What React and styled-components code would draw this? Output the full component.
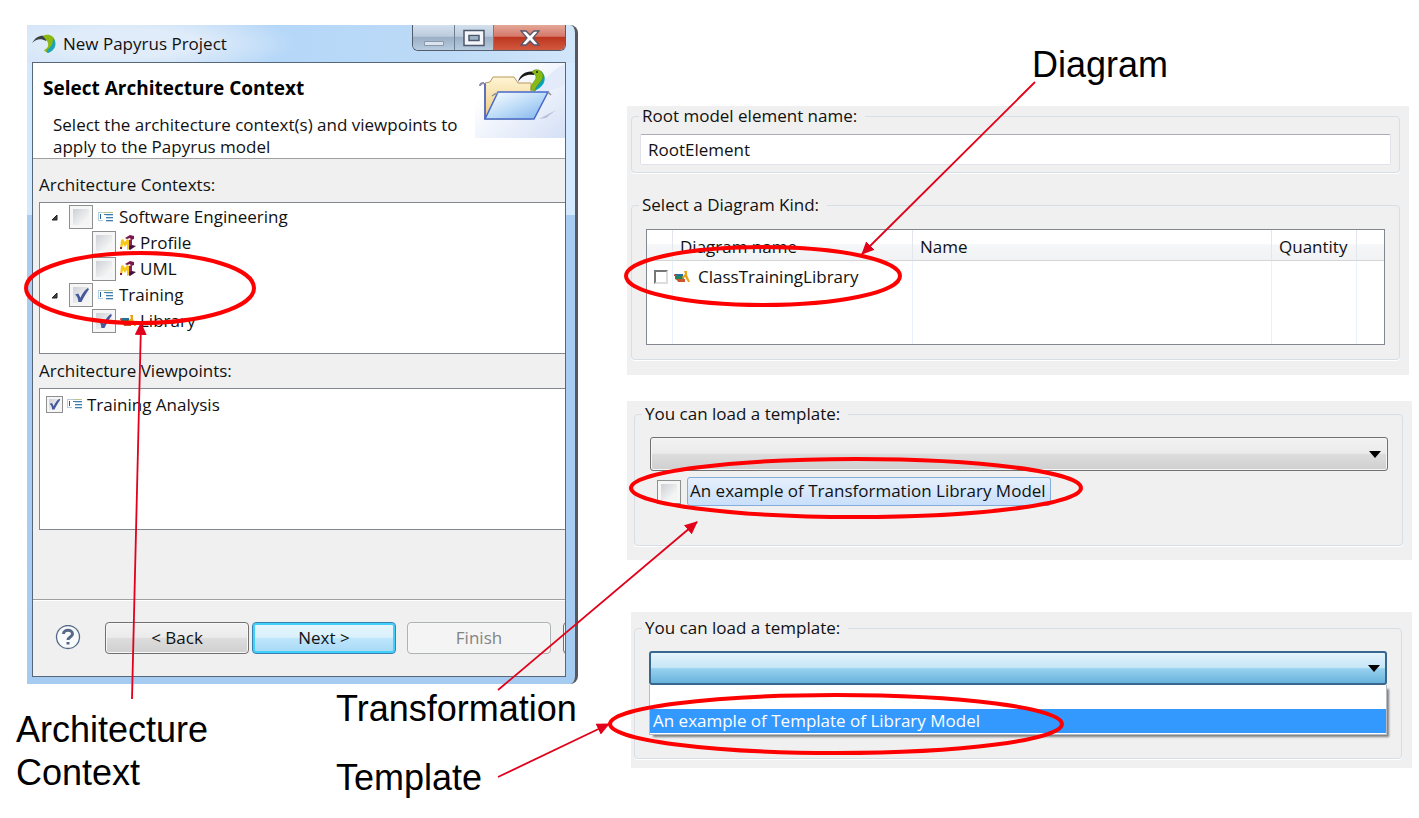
import React from "react";
import styled, { createGlobalStyle, css } from "styled-components";

const GlobalStyle = createGlobalStyle`
  *, *::before, *::after { box-sizing: border-box; }
  body {
    margin: 0;
    background: #fff;
    color: #111;
    font: 17px/20px "Open Sans", "Noto Sans", sans-serif;
  }
  button, input, select { font: inherit; color: inherit; margin: 0; }
  svg { display: block; flex: none; }
`;

/* ---------- slide ---------- */
const Slide = styled.main`
  position: relative;
  display: flex;
  min-height: 100vh;
  overflow: hidden;
`;
const LeftSide = styled.div`
  flex: none;
  width: 627px;
  padding: 25px 0 0 16px;
`;
const RightSide = styled.div`
  flex: 1;
  min-width: 0;
  padding: 43px 7px 0 0;
`;
const Captions = styled.div`
  display: flex;
  align-items: flex-start;
  margin-top: 3px;
`;
const CaptionColumn = styled.div`
  display: grid;
  gap: 26px;
  width: ${(p) => p.$width};
  padding-top: ${(p) => p.$top || "0"};
`;
const Caption = styled.p`
  margin: 0 0 0 ${(p) => p.$indent || "0"};
  font: 36px/43px "Liberation Sans", Arial, sans-serif;
  color: #000;
`;
const Overlay = styled.svg`
  position: absolute;
  top: 0;
  left: 0;
  pointer-events: none;
`;

/* ---------- wizard window ---------- */
const Window = styled.section`
  width: 551px;
  margin-left: 11px;
  padding: 0 9px 7px 5px;
  border-right: 3px solid #55595e;
  border-radius: 0 8px 8px 0;
  background:
    radial-gradient(ellipse 170px 34px at 100px 18px, #e0ecf9 40%, transparent),
    linear-gradient(90deg, #cfe3f8, #b5d7f8 45%, #bcdaf7 75%, #d2e6fa) top / 100% 38px no-repeat,
    linear-gradient(#d3e9ff 0 190px, #a9cdf2 190px 480px, #a6cbf1);
`;
const TitleBar = styled.header`
  display: flex;
  align-items: flex-start;
  justify-content: space-between;
  height: 37px;
`;
const TitleText = styled.div`
  display: flex;
  align-items: center;
  gap: 6px;
  height: 38px;
`;
const Controls = styled.div`
  display: flex;
  border: 1px solid #535d6c;
  border-top: 0;
  border-radius: 0 0 6px 6px;
  overflow: hidden;
`;
const ControlButton = styled.button`
  display: grid;
  place-items: center;
  width: ${(p) => p.$width};
  height: 25px;
  padding: 0;
  border: 0;
  border-right: 1px solid #6f7f93;
  background: linear-gradient(#d3e0ee, #bccbdc 45%, #9bafc5 50%, #b8cce0);
  &:last-child { border-right: 0; }
  ${(p) => p.$close && css`
    background: linear-gradient(#e3a898, #d5786a 45%, #bd3720 50%, #d1593f);
  `}
`;
const Client = styled.div`
  border: 1px solid #56677a;
  background: #f0f0f0;
  overflow: hidden;
`;
const Header = styled.div`
  display: flex;
  justify-content: space-between;
  align-items: flex-start;
  padding-left: 10px;
  border-bottom: 1px solid #a0a0a0;
  background: #fff;
`;
const Heading = styled.h1`
  margin: 13px 0 14px;
  font-size: 19px;
  line-height: 24px;
  color: #000;
`;
const Description = styled.p`
  margin: 0 0 0 10px;
  line-height: 22px;
`;
const Content = styled.div`
  padding: 16px 0 69px 6px;
`;
const ListTitle = styled.h2`
  margin: 0 0 7px;
  font-size: 17px;
  line-height: 20px;
  font-weight: 400;
`;
const List = styled.ul`
  list-style: none;
  margin: 0 0 7px;
  padding: 1px 0;
  min-height: ${(p) => p.$height};
  border: 1px solid #828790;
  border-right: 0;
  background: #fff;
  &:last-child { margin: 0; }
`;
const Item = styled.li`
  display: flex;
  align-items: center;
  height: ${(p) => (p.$compact ? "29px" : "26px")};
  padding-left: ${(p) => p.$indent};
`;
const Expander = styled.svg`
  margin-right: 11px;
`;
const CheckLabel = styled.label`
  display: flex;
  align-items: center;
  gap: ${(p) => p.$gap || "4px"};
`;
const BoxCell = styled.span`
  display: grid;
  flex: none;
  place-items: center;
  & > * { grid-area: 1 / 1; }
`;
const Box = styled.input`
  appearance: none;
  width: ${(p) => p.$size};
  height: ${(p) => p.$size};
  border: 1px solid #8e8f8f;
  background: linear-gradient(135deg, #cdd0d6, #f4f4f4 75%) content-box, #f6f6f6;
  padding: ${(p) => (p.$size === "24px" ? "3px" : "2px")};
  ${(p) => p.$classic && css`
    border: 2px solid;
    border-color: #777 #ddd #ddd #777;
    background: #fff;
  `}
`;
const Footer = styled.footer`
  display: flex;
  align-items: center;
  height: 77px;
  padding: 0 0 0 22px;
  border-top: 1px solid #a0a0a0;
  box-shadow: inset 0 1px #fff;
`;
const HelpButton = styled.button`
  padding: 0;
  margin-right: 24px;
  border: 0;
  background: none;
`;
const PushButton = styled.button`
  flex: none;
  width: 144px;
  height: 32px;
  margin-right: ${(p) => p.$after || "0"};
  padding: 0;
  border: 1px solid #707070;
  border-radius: 4px;
  background: linear-gradient(#f2f2f2, #ebebeb 48%, #dddddd 50%, #cfcfcf);
  box-shadow: inset 0 0 0 1px #f7f7f7;
  ${(p) => p.$primary && css`
    border-color: #3c7fb1;
    background: linear-gradient(#e9f6fd, #d9f0fc 48%, #bee6fd 50%, #a7d9f5);
    box-shadow: inset 0 0 0 2px #40d0fa;
  `}
  &:disabled {
    border-color: #adb2b5;
    background: #f4f4f4;
    color: #838383;
  }
`;

/* ---------- option panels ---------- */
const Panel = styled.section`
  margin: ${(p) => p.$margin};
  padding: ${(p) => p.$padding};
  background: #f0f0f0;
`;
const Group = styled.fieldset`
  min-width: 0;
  margin: 0 0 ${(p) => p.$after || "0"};
  padding: 0 7px;
  border: 1px solid #d5dfe5;
  border-radius: 4px;
  box-shadow: 0 1px #fff;
`;
const GroupBody = styled.div`
  padding: ${(p) => p.$padding};
`;
const Legend = styled.legend`
  padding: 0 8px 0 3px;
  line-height: 20px;
`;
const TextBox = styled.input`
  display: block;
  width: 100%;
  height: 31px;
  padding: 0 7px;
  border: 1px solid #e2e3ea;
  border-top-color: #abadb3;
  border-radius: 2px;
  background: #fff;
`;
const Table = styled.table`
  width: 100%;
  height: 116px;
  table-layout: fixed;
  border: 1px solid #828790;
  border-spacing: 0;
  background: #fff;
  th {
    height: 31px;
    padding: 4px 0 0 7px;
    border-right: 1px solid #e3e6ea;
    border-bottom: 1px solid #d5d5d5;
    background: linear-gradient(#fff 45%, #f4f6f8 50%, #f1f2f4);
    font-weight: 400;
    text-align: left;
  }
  td {
    padding: 6px 0 0;
    border-right: 1px solid #e8f2fc;
    vertical-align: top;
  }
  th:last-child, td:last-child { border-right: 0; }
`;
const Col = styled.col`
  width: ${(p) => p.$width};
`;
const TickCell = styled.div`
  display: flex;
  align-items: center;
  height: 20px;
  padding-left: 7px;
`;
const NameCell = styled.label`
  display: flex;
  align-items: center;
  gap: 8px;
  padding-left: 1px;
`;
const Combo = styled.div`
  position: relative;
`;
const Select = styled.select`
  display: block;
  appearance: none;
  width: 100%;
  height: 34px;
  border: 1px solid #707070;
  border-radius: 3px;
  background: linear-gradient(#f2f2f2, #ebebeb 48%, #dddddd 50%, #cfcfcf);
  box-shadow: inset 0 0 0 1px #f5f5f5;
  ${(p) => p.$open && css`
    border: 2px solid #38678f;
    background: linear-gradient(#e5f4fc, #c4e5f6 50%, #98d1ef 52%, #68b3db);
    box-shadow: none;
  `}
`;
const Arrow = styled.svg`
  position: absolute;
  top: 14px;
  right: 7px;
  pointer-events: none;
`;
const Choice = styled.div`
  padding: 6px 0 0 7px;
`;
const ChoiceText = styled.span`
  height: 29px;
  padding: 3px 4px 3px 2px;
  border: 1px solid #84acdd;
  border-radius: 3px;
  background: linear-gradient(#e6f0fc, #c9dffb);
`;
const Menu = styled.ul`
  list-style: none;
  margin: 0;
  padding: 0 0 1px;
  border: 1px solid #b8bcc4;
  border-top: 0;
  background: #fff;
  box-shadow: 3px 3px 2px -1px #808080;
`;
const Option = styled.li`
  height: 24px;
  padding: 2px 3px;
  ${(p) => p.$selected && css`
    background: #3399ff;
    color: #fff;
  `}
`;

/* ---------- drawings ---------- */
const PapyrusIcon = () => (
  <svg width="25" height="20" viewBox="0 0 25 20" aria-hidden="true">
    <path d="M0 9C4 2 10 0 16 3l-2 4C9 4 4 5 0 9z" fill="#3b4246" />
    <path d="M11 2C15-1 23 1 23 8c0 6-3 9-7 11-3-1-4-3-4-3 5-2 5-6 3-9-1-2-3-3-4-5z" fill="#8cb80f" />
    <path d="M21 4c5 5 2 13-5 15-2-1-1-3-1-3 4-3 6-6 6-12z" fill="#1ba4b5" />
  </svg>
);
const FolderArt = () => (
  <svg width="90" height="75" viewBox="0 0 90 75" aria-hidden="true">
    <defs>
      <linearGradient id="wash" x1="0" y1="0" x2="1" y2="1">
        <stop offset=".25" stopColor="#fff" /><stop offset="1" stopColor="#d5e0f6" />
      </linearGradient>
      <linearGradient id="front" x1="0" y1="0" x2="1" y2="1">
        <stop offset="0" stopColor="#fff" /><stop offset=".5" stopColor="#bfddf8" /><stop offset="1" stopColor="#7fb2ec" />
      </linearGradient>
      <linearGradient id="back" x1="0" y1="0" x2="0" y2="1">
        <stop offset="0" stopColor="#fff5d5" /><stop offset="1" stopColor="#ecc779" />
      </linearGradient>
    </defs>
    <path d="M0 0h90v75H0z" fill="url(#wash)" />
    <path d="M90 1C75 8 68 18 60 33L90 22z" fill="#e3eaf9" />
    <g transform="translate(-1 1)">
      <path d="M65 55L82 46 72 54z" fill="#b9c0da" />
      <path d="M11 55V19l5-1 3-5h21l4 6h13v36z" fill="url(#back)" stroke="#b79858" />
      <path d="M6 22q0-3 4-3M11 19v36" fill="none" stroke="#8a8ca8" strokeWidth="2" />
      <path d="M11 20v35" fill="none" stroke="#5267c4" strokeWidth="1.5" />
      <path d="M24 28L11 55h49l14-27z" fill="url(#front)" stroke="#4669c9" strokeWidth="1.5" />
      <path d="M24 29l-3 1-3 2M74 28l3 3" fill="none" stroke="#929292" strokeWidth="1.5" />
      <path d="M44 18C46 10 53 6 61 8l-1 3c-7-1-12 1-16 7z" fill="#171717" />
      <path d="M67 7c7 6 4 16-7 20l0-3c4-4 7-10 7-17z" fill="#08a2be" />
      <path d="M58 8c2-4 11-3 11 4 0 6-7 8-8 15l-4-1c-1-6 5-9 5-13 0-2-2-3-4-5z" fill="#87bb12" stroke="#557b12" strokeWidth=".5" />
      <circle cx="63" cy="8" r="1" fill="#222" />
    </g>
  </svg>
);
const ContextIcon = () => (
  <svg width="16" height="13" viewBox="0 0 16 13" aria-hidden="true">
    <path d="M0 1h6v1H0zM0 2h1v8H0zM0 9h5v1H0z" fill="#b5cddd" />
    <path d="M2 3h1v5H2z" fill="#1f5f96" />
    <path d="M6 1h9v1H6z" fill="#b9c58b" />
    <path d="M6 3h9v1H6zM8 6h7v1H8zM8 9h7v1H8z" fill="#3b7fb0" />
    <path d="M8 4h7v1H8zM8 7h7v1H8zM8 10h7v1H8z" fill="#c3d7e4" />
  </svg>
);
const ModelIcon = () => (
  <svg width="16" height="16" viewBox="0 0 16 16" aria-hidden="true">
    <path d="M5 3l5-3 4 1v3l-3 1-1-2-3 1z" fill="#7b174c" />
    <path d="M9 5l3-1v7l-3 1z" fill="#8c2350" />
    <path d="M9 11l3-1 4 1-6 4-3-2z" fill="#45103f" />
    <path d="M1 5l2-1 2 3 2-3 2 1v9l-2 1V9l-2 3-2-3-1 5-2 0z" fill="#f7c719" />
    <path d="M0 12h2v2H0z" fill="#7b174c" />
  </svg>
);
const LibraryIcon = () => (
  <svg width="16" height="14" viewBox="0 0 16 14" aria-hidden="true">
    <path d="M1 4h8v2H1z" fill="#216f9f" />
    <path d="M1 6h9v3H1z" fill="#25845d" />
    <path d="M0 4l3 2H0zM3 9h8v3H4z" fill="#cd552b" />
    <path d="M1 9h3v2z" fill="#b5612f" />
    <path d="M10 1h3v4l3 7h-2l-3-5-2 2-1-2 3-3z" fill="#eaa319" />
  </svg>
);
const HelpIcon = () => (
  <svg width="26" height="26" viewBox="0 0 26 26" fill="none" stroke="#566986" aria-hidden="true">
    <circle cx="13" cy="12" r="11.5" strokeWidth="1.3" fill="#f8f9fb" />
    <path d="M8.500 9c0-5 9-5 9 0 0 3-4.500 3-4.500 6M13 17v2.500" strokeWidth="3" />
  </svg>
);
const Tick = ({ size }) => (
  <svg width={size} height={size} viewBox="0 0 16 16" pointerEvents="none" aria-hidden="true">
    <path d="M2 7l3-1 2 4c2-4 4-7 7-9l1 1c-3 4-5 8-7 12H5C5 11 4 9 2 7z" fill="#45589b" />
  </svg>
);
const DownArrow = () => (
  <Arrow width="12" height="7" viewBox="0 0 12 7" aria-hidden="true">
    <path d="M0 0h12L6 7z" fill="#000" />
  </Arrow>
);

/* ---------- parts ---------- */
function CheckBox({ size = "24px", ...rest }) {
  return (
    <BoxCell>
      <Box type="checkbox" $size={size} {...rest} />
      {rest.defaultChecked && <Tick size={size === "24px" ? 17 : 13} />}
    </BoxCell>
  );
}

function TreeItem({ text, icon, child, checked }) {
  return (
    <Item $indent={child ? "52px" : "11px"}>
      {!child && (
        <Expander width="7" height="7" viewBox="0 0 7 7" aria-hidden="true">
          <path d="M6 1v5H1z" fill="#404040" stroke="#222" />
        </Expander>
      )}
      <CheckLabel $gap={child ? "4px" : "5px"}>
        <CheckBox defaultChecked={checked} />
        {icon}
        {text}
      </CheckLabel>
    </Item>
  );
}

const ellipses = [
  [140, 288, 114, 35],
  [763, 276, 137, 29],
  [856, 488, 225, 29],
  [836, 724, 226, 29],
];
const arrows = [
  [132, 699, 141, 323],
  [1035, 82, 862, 254],
  [498, 690, 697, 522],
  [498, 777, 609, 724],
];

function Annotations() {
  return (
    <Overlay width="1419" height="818" viewBox="0 0 1419 818" aria-hidden="true">
      <defs>
        <marker id="head" markerUnits="userSpaceOnUse" markerWidth="13" markerHeight="12" refX="12" refY="6" orient="auto">
          <path d="M0 0L13 6L0 12z" fill="#e2001a" />
        </marker>
      </defs>
      {arrows.map(([x1, y1, x2, y2]) => (
        <line key={y1} x1={x1} y1={y1} x2={x2} y2={y2} stroke="#e2001a" strokeWidth="1.800" markerEnd="url(#head)" />
      ))}
      {ellipses.map(([cx, cy, rx, ry]) => (
        <ellipse key={cy} cx={cx} cy={cy} rx={rx} ry={ry} fill="none" stroke="#ff0000" strokeWidth="4" />
      ))}
    </Overlay>
  );
}

function Wizard() {
  return (
    <Window>
      <TitleBar>
        <TitleText><PapyrusIcon />New Papyrus Project</TitleText>
        <Controls>
          <ControlButton $width="42px" aria-label="Minimize">
            <svg width="20" height="20" viewBox="0 0 20 20"><path d="M.5 13.500h19v4H.5z" fill="#dce5ee" stroke="#8998aa" /></svg>
          </ControlButton>
          <ControlButton $width="39px" aria-label="Maximize">
            <svg width="22" height="18" viewBox="0 0 22 18">
              <path d="M1 1.500h20v15H1zM6 6.500h10v5H6z" fill="#f4f6f9" fillRule="evenodd" stroke="#4d586b" strokeWidth="1.500" />
            </svg>
          </ControlButton>
          <ControlButton $width="71px" $close aria-label="Close">
            <svg width="20" height="18" viewBox="0 0 20 18">
              <path d="M1 2h5l4 4 4-4h5l-6 7 6 7h-5l-4-4-4 4H1l6-7z" fill="#fff" stroke="#59566b" strokeWidth="1.300" />
            </svg>
          </ControlButton>
        </Controls>
      </TitleBar>
      <Client>
        <Header>
          <div>
            <Heading>Select Architecture Context</Heading>
            <Description>
              Select the architecture context(s) and viewpoints to<br />
              apply to the Papyrus model
            </Description>
          </div>
          <FolderArt />
        </Header>
        <Content>
          <ListTitle>Architecture Contexts:</ListTitle>
          <List $height="152px">
            <TreeItem text="Software Engineering" icon={<ContextIcon />} />
            <TreeItem child text="Profile" icon={<ModelIcon />} />
            <TreeItem child text="UML" icon={<ModelIcon />} />
            <TreeItem checked text="Training" icon={<ContextIcon />} />
            <TreeItem child checked text="Library" icon={<LibraryIcon />} />
          </List>
          <ListTitle>Architecture Viewpoints:</ListTitle>
          <List $height="142px">
            <Item $compact $indent="6px">
              <CheckLabel $gap="4px">
                <CheckBox size="17px" defaultChecked />
                <ContextIcon />
                Training Analysis
              </CheckLabel>
            </Item>
          </List>
        </Content>
        <Footer>
          <HelpButton aria-label="Help"><HelpIcon /></HelpButton>
          <PushButton $after="3px">&lt; Back</PushButton>
          <PushButton $primary $after="11px">Next &gt;</PushButton>
          <PushButton disabled $after="12px">Finish</PushButton>
          <PushButton aria-label="Cancel" />
        </Footer>
      </Client>
    </Window>
  );
}

export default function App() {
  return (
    <>
      <GlobalStyle />
      <Slide>
        <LeftSide>
          <Wizard />
          <Captions>
            <CaptionColumn $width="320px" $top="21px">
              <Caption>Architecture<br />Context</Caption>
            </CaptionColumn>
            <CaptionColumn $width="auto">
              <Caption>Transformation</Caption>
              <Caption>Template</Caption>
            </CaptionColumn>
          </Captions>
        </LeftSide>
        <RightSide>
          <Caption $indent="405px">Diagram</Caption>
          <Panel $margin="20px 3px 26px 0" $padding="0 9px 15px 4px">
            <Group $after="22px">
              <Legend><label htmlFor="root-name">Root model element name:</label></Legend>
              <GroupBody $padding="8px 1px 7px">
                <TextBox id="root-name" defaultValue="RootElement" />
              </GroupBody>
            </Group>
            <Group>
              <Legend>Select a Diagram Kind:</Legend>
              <GroupBody $padding="14px 7px">
                <Table>
                  <colgroup>
                    <Col $width="26px" />
                    <Col $width="240px" />
                    <Col />
                    <Col $width="85px" />
                    <Col $width="27px" />
                  </colgroup>
                  <thead>
                    <tr><th /><th>Diagram name</th><th>Name</th><th>Quantity</th><th /></tr>
                  </thead>
                  <tbody>
                    <tr>
                      <td><TickCell><CheckBox id="library" size="14px" $classic /></TickCell></td>
                      <td><NameCell htmlFor="library"><LibraryIcon />ClassTrainingLibrary</NameCell></td>
                      <td /><td /><td />
                    </tr>
                  </tbody>
                </Table>
              </GroupBody>
            </Group>
          </Panel>
          <Panel $margin="0 0 52px" $padding="3px 9px 14px 7px">
            <Group>
              <Legend><label htmlFor="template">You can load a template:</label></Legend>
              <GroupBody $padding="13px 7px 39px 8px">
                <Combo>
                  <Select id="template"><option value="" /></Select>
                  <DownArrow />
                </Combo>
                <Choice>
                  <CheckLabel $gap="6px">
                    <CheckBox />
                    <ChoiceText>An example of Transformation Library Model</ChoiceText>
                  </CheckLabel>
                </Choice>
              </GroupBody>
            </Group>
          </Panel>
          <Panel $margin="0 0 0 4px" $padding="6px 10px 9px 3px">
            <Group>
              <Legend><label htmlFor="template-open">You can load a template:</label></Legend>
              <GroupBody $padding="13px 7px 23px">
                <Combo>
                  <Select id="template-open" $open><option value="" /></Select>
                  <DownArrow />
                </Combo>
                <Menu role="listbox" aria-label="Templates">
                  <Option role="option" aria-label="None" />
                  <Option role="option" aria-selected="true" $selected>An example of Template of Library Model</Option>
                </Menu>
              </GroupBody>
            </Group>
          </Panel>
        </RightSide>
        <Annotations />
      </Slide>
    </>
  );
}
